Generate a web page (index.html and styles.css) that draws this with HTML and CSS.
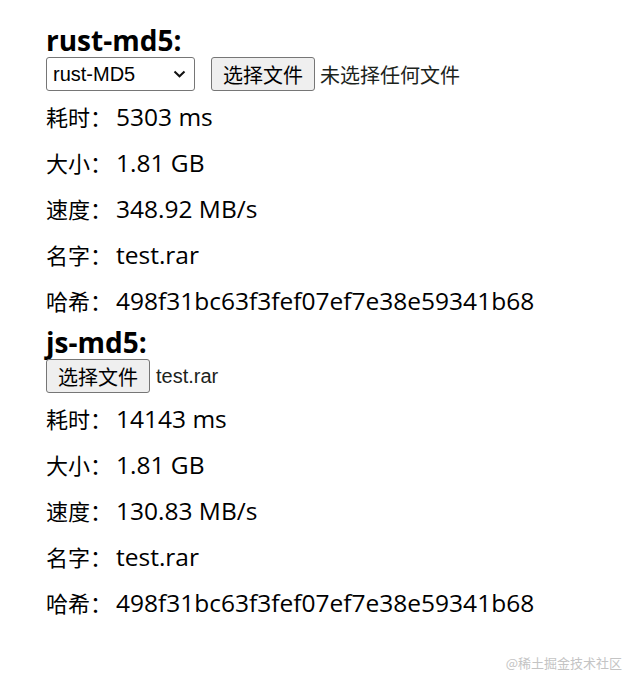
FILE: index.html
```html
<!DOCTYPE html>
<html lang="zh-CN">
<head>
    <meta charset="UTF-8">
    <meta name="viewport" content="width=device-width, initial-scale=1.0">
    <title>MD5 对比</title>
    <link rel="stylesheet" href="styles.css">
</head>
<body>
    <section class="bench">
        <h2>rust-md5:</h2>
        <div class="controls">
            <div class="select-wrap">
                <select class="mode-select">
                    <option>rust-MD5</option>
                    <option>rust-MD5-wasm</option>
                </select>
                <svg class="chevron" width="13" height="8" viewBox="0 0 13 8" fill="none">
                    <path d="M1.5 1.5L6.5 6.3L11.5 1.5" stroke="#111" stroke-width="2"/>
                </svg>
            </div>
            <label class="file-btn">
                <input type="file" class="file-input">
                选择文件
            </label>
            <span class="file-name">未选择任何文件</span>
        </div>
        <div class="stats">
            <p><span class="label">耗时：</span><span class="value">5303 ms</span></p>
            <p><span class="label">大小：</span><span class="value">1.81 GB</span></p>
            <p><span class="label">速度：</span><span class="value">348.92 MB/s</span></p>
            <p><span class="label">名字：</span><span class="value">test.rar</span></p>
            <p><span class="label">哈希：</span><span class="value">498f31bc63f3fef07ef7e38e59341b68</span></p>
        </div>
    </section>

    <section class="bench">
        <h2>js-md5:</h2>
        <div class="controls">
            <label class="file-btn first">
                <input type="file" class="file-input">
                选择文件
            </label>
            <span class="file-name latin">test.rar</span>
        </div>
        <div class="stats">
            <p><span class="label">耗时：</span><span class="value">14143 ms</span></p>
            <p><span class="label">大小：</span><span class="value">1.81 GB</span></p>
            <p><span class="label">速度：</span><span class="value">130.83 MB/s</span></p>
            <p><span class="label">名字：</span><span class="value">test.rar</span></p>
            <p><span class="label">哈希：</span><span class="value">498f31bc63f3fef07ef7e38e59341b68</span></p>
        </div>
    </section>

    <div class="watermark">@稀土掘金技术社区</div>
</body>
</html>
```

FILE: styles.css
```css
* {
    margin: 0;
    padding: 0;
    box-sizing: border-box;
}

body {
    font-family: "Open Sans", "Noto Sans CJK SC", sans-serif;
    color: #000;
    background: #fff;
    padding: 23px 46px;
    min-height: 100vh;
}

.bench h2 {
    font-size: 28px;
    font-weight: 700;
    line-height: 34px;
}

.bench + .bench {
    margin-top: 10px;
}

.controls {
    display: flex;
    align-items: center;
    height: 34px;
}

.select-wrap {
    position: relative;
    margin-right: 16px;
}

.mode-select {
    appearance: none;
    width: 149px;
    height: 34px;
    padding: 0 0 0 6px;
    font-family: "Liberation Sans", Arial, sans-serif;
    font-size: 20px;
    color: #000;
    background: #fff;
    border: 1px solid #767676;
    border-radius: 3px;
}

.chevron {
    position: absolute;
    right: 9px;
    top: 13px;
    pointer-events: none;
}

.file-btn {
    display: flex;
    align-items: center;
    height: 34px;
    padding: 0 11px;
    font-family: "Noto Sans CJK SC", sans-serif;
    font-size: 20px;
    background: #efefef;
    border: 1px solid #767676;
    border-radius: 3px;
    cursor: pointer;
}

.file-input {
    display: none;
}

.file-name {
    margin-left: 5px;
    font-family: "Noto Sans CJK SC", sans-serif;
    font-size: 20px;
    color: #1c241c;
}

.file-name.latin {
    font-family: "Liberation Sans", Arial, sans-serif;
    margin-left: 6px;
}

.stats {
    display: flex;
    flex-direction: column;
    gap: 16px;
    margin-top: 10px;
}

.stats p {
    height: 30px;
    line-height: 30px;
    white-space: nowrap;
}

.label {
    font-family: "Noto Sans CJK SC", sans-serif;
    font-size: 22px;
}

.value {
    font-size: 24.5px;
    margin-left: 4px;
}

.watermark {
    position: absolute;
    right: 5px;
    bottom: 6px;
    font-family: "Noto Sans CJK SC", sans-serif;
    font-size: 13px;
    color: #c4c4c4;
}
```
